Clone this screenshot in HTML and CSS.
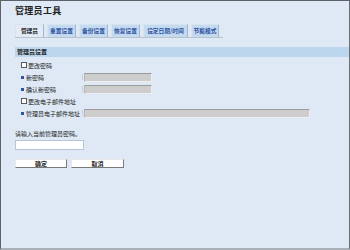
FILE: index.html
```html
<!DOCTYPE html>
<html lang="zh-CN">
<head>
<meta charset="utf-8">
<link rel="stylesheet" href="styles.css">
</head>
<body>
<div class="frame">
  <h1 class="title">管理员工具</h1>
  <div class="tabs">
    <span class="tab active">管理员</span>
    <span class="tab">重置设置</span>
    <span class="tab">备份设置</span>
    <span class="tab">恢复设置</span>
    <span class="tab wide">设定日期/时间</span>
    <span class="tab">节能模式</span>
  </div>
  <div class="section-head">管理员设置</div>
  <div class="rows">
    <div class="row"><span class="cb"></span><span class="text">更改密码</span></div>
    <div class="row"><span class="bullet"></span><span class="label">新密码</span><span class="tick"></span><span class="field short"></span></div>
    <div class="row"><span class="bullet"></span><span class="label">确认新密码</span><span class="tick"></span><span class="field short"></span></div>
    <div class="row"><span class="cb"></span><span class="text">更改电子邮件地址</span></div>
    <div class="row"><span class="bullet"></span><span class="label">管理员电子邮件地址</span><span class="tick"></span><span class="field long"></span></div>
  </div>
  <div class="prompt">请输入当前管理员密码。</div>
  <div class="pw"></div>
  <div class="buttons">
    <span class="btn">确定</span>
    <span class="btn">取消</span>
  </div>
</div>
</body>
</html>
```
FILE: styles.css
```css
html, body {
  margin: 0;
  padding: 0;
}
body {
  width: 350px;
  height: 250px;
  overflow: hidden;
  font-family: "Noto Sans CJK SC", "Noto Sans", sans-serif;
  color: #1a1a1a;
}
.frame {
  box-sizing: border-box;
  width: 350px;
  height: 250px;
  background: #dee9f5;
  border-top: 1px solid #5d6168;
  border-left: 1px solid #5d6168;
  border-right: 1px solid #6a6f77;
  border-bottom: 2px solid #a9b0b8;
  padding: 4px 0 0 14px;
  display: flex;
  flex-direction: column;
}
.title {
  margin: 0;
  font-size: 9px;
  line-height: 12px;
  height: 12px;
  font-weight: bold;
  color: #222;
  letter-spacing: 0.3px;
}
.tabs {
  margin-top: 7px;
  display: flex;
  gap: 3px;
  width: 208px;
  height: 13px;
  border-bottom: 1px solid #b9c3ce;
}
.tab {
  box-sizing: border-box;
  width: 29px;
  height: 13px;
  line-height: 11px;
  text-align: center;
  font-size: 5.75px;
  font-weight: bold;
  color: #2f52a3;
  background: #c4daf0;
  border: 1px solid #d6e4f2;
  border-right-color: #aab6c3;
  border-bottom: none;
  white-space: nowrap;
}
.tab.active {
  background: #e3ecf6;
  color: #1e1e1e;
}
.tab.wide { width: 45px; }
.tab:last-child { width: 28px; }
.section-head {
  margin-top: 9px;
  height: 10px;
  line-height: 10px;
  background: #bcd6ee;
  font-size: 6px;
  font-weight: bold;
  padding-left: 2px;
  color: #1e1e1e;
}
.rows {
  margin-top: 2px;
  display: flex;
  flex-direction: column;
  padding-left: 6px;
}
.row {
  height: 12px;
  display: flex;
  align-items: center;
  font-size: 6px;
  color: #222;
}
.cb {
  box-sizing: border-box;
  width: 6px;
  height: 6px;
  border: 1px solid #5a5a5a;
  background: #fff;
  margin-right: 1px;
}
.bullet {
  width: 3px;
  height: 3px;
  background: #2f54a5;
  margin-right: 2px;
}
.label {
  width: 56px;
}
.tick {
  width: 1px;
  height: 6px;
  background: #c8cfd6;
  margin-right: 1px;
}
.field {
  box-sizing: border-box;
  height: 9px;
  background: #cdcdcd;
  border-top: 1px solid #9c9c9c;
  border-left: 1px solid #b5b5b5;
  border-right: 1px solid #eeeeee;
  border-bottom: 1px solid #eeeeee;
}
.field.short { width: 68px; }
.field.long { width: 226px; }
.prompt {
  margin-top: 10px;
  font-size: 6px;
  line-height: 10px;
  height: 10px;
  color: #222;
}
.pw {
  box-sizing: border-box;
  margin-top: 1px;
  width: 69px;
  height: 10px;
  background: #fff;
  border: 1px solid #b4c6d8;
}
.buttons {
  margin-top: 9px;
  display: flex;
  gap: 4px;
}
.btn {
  box-sizing: border-box;
  width: 52px;
  height: 9px;
  line-height: 7px;
  text-align: center;
  font-size: 6px;
  font-weight: bold;
  color: #1e1e1e;
  background: #ffffff;
  border: 1px solid #e8e8e8;
  border-right-color: #7a7a7a;
  border-bottom-color: #7a7a7a;
}
.btn + .btn { width: 53px; }
```
